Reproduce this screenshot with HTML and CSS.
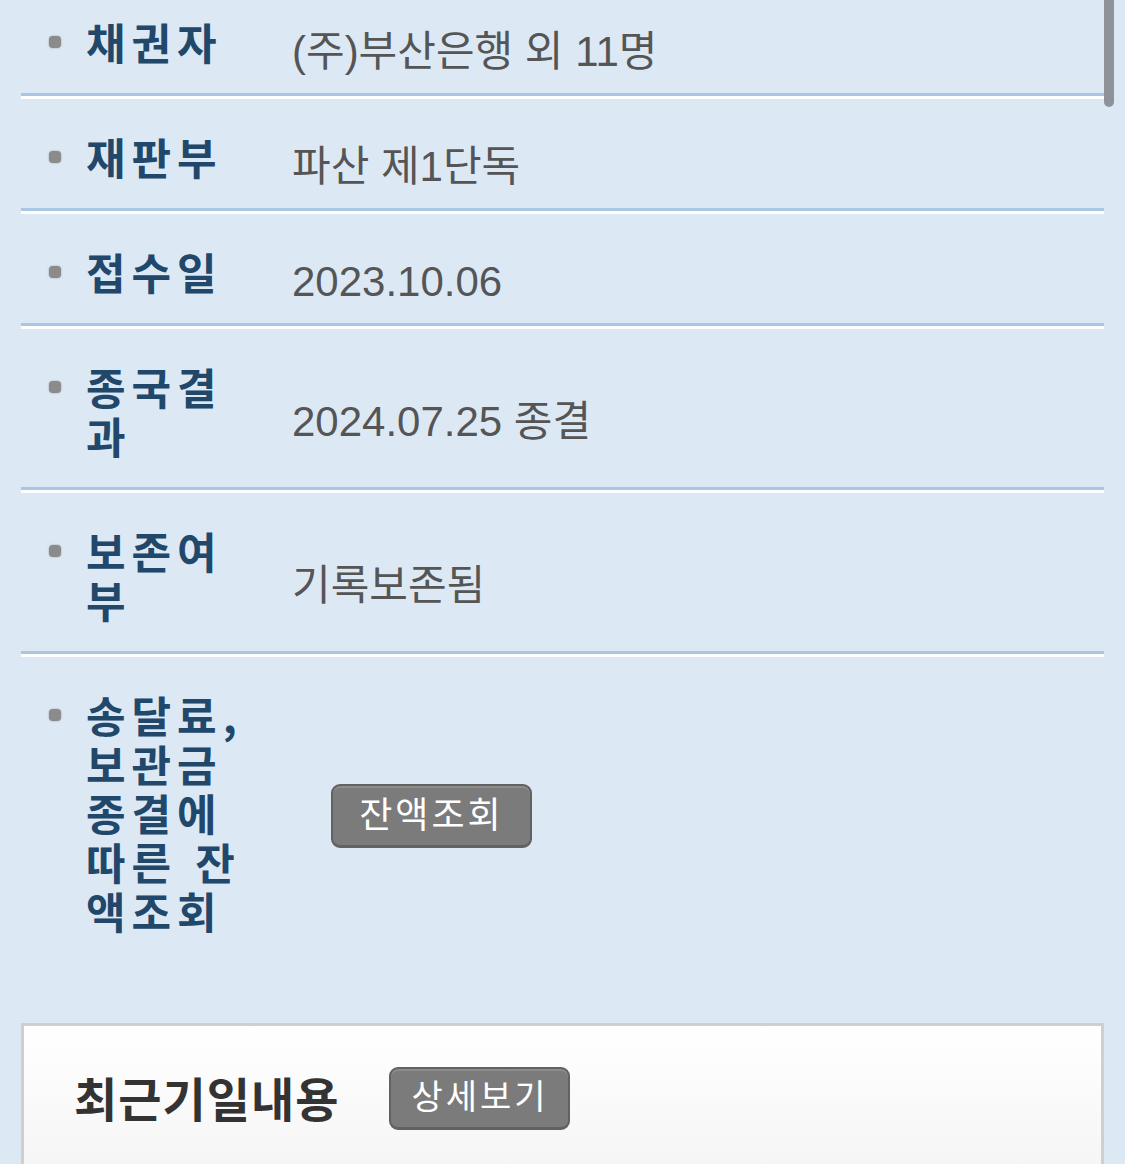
FILE: index.html
```html
<!DOCTYPE html>
<html lang="ko">
<head>
    <meta charset="UTF-8">
    <meta name="viewport" content="width=device-width, initial-scale=1.0">
    <title>사건일반내용</title>
    <link rel="stylesheet" href="styles.css">
</head>
<body>
    <div class="info">
        <div class="row">
            <div class="label"><span class="dot"></span><span class="label-text">채권자</span></div>
            <div class="value">(주)부산은행 외 11명</div>
        </div>
        <div class="row">
            <div class="label"><span class="dot"></span><span class="label-text">재판부</span></div>
            <div class="value">파산 제1단독</div>
        </div>
        <div class="row">
            <div class="label"><span class="dot"></span><span class="label-text">접수일</span></div>
            <div class="value">2023.10.06</div>
        </div>
        <div class="row">
            <div class="label"><span class="dot"></span><span class="label-text">종국결과</span></div>
            <div class="value">2024.07.25 종결</div>
        </div>
        <div class="row">
            <div class="label"><span class="dot"></span><span class="label-text">보존여부</span></div>
            <div class="value">기록보존됨</div>
        </div>
        <div class="row last">
            <div class="label"><span class="dot"></span><span class="label-text">송달료, 보관금 종결에 따른 잔액조회</span></div>
            <div class="value"><button class="btn btn-balance">잔액조회</button></div>
        </div>
    </div>

    <div class="box">
        <h3 class="box-title">최근기일내용</h3>
        <button class="btn btn-detail">상세보기</button>
    </div>

    <div class="scrollbar"></div>
</body>
</html>
```

FILE: styles.css
```css
*{
    margin: 0;
    padding: 0;
    box-sizing: border-box;
}

body{
    background-color: #dce9f5;
    font-family: "Liberation Sans", "Noto Sans CJK KR", sans-serif;
    padding: 0 21px;
    overflow: hidden;
}

.info{
    margin-top: -16px;
}
.row{
    display: flex;
    align-items: center;
    padding: 33px 0 27px;
    border-bottom: 3px solid #a9c7e3;
    box-shadow: 0 3px 0 #fff;
    margin-bottom: 3px;
}
.row.last{
    border-bottom: 0;
    box-shadow: none;
    margin-bottom: 0;
}

.label{
    display: flex;
    align-items: flex-start;
    width: 271px;
    flex-shrink: 0;
    padding-left: 28px;
}
.dot{
    width: 12px;
    height: 12px;
    margin-top: 19px;
    margin-right: 25px;
    border-radius: 4px;
    background: #8b8b8b;
    box-shadow: 0 0 2px #999;
    flex-shrink: 0;
}
.label-text{
    width: 166px;
    font-family: "Noto Sans CJK KR", sans-serif;
    font-weight: 700;
    font-size: 43px;
    line-height: 49px;
    letter-spacing: 6px;
    color: #21486b;
}

/* value text sits a little lower than the label */
.value{
    font-size: 42px;
    line-height: 49px;
    color: #555;
    padding-top: 10px;
    margin-bottom: -10px;
}
.row.last .value{
    padding-top: 0;
    margin-bottom: 0;
}

.btn{
    display: inline-flex;
    align-items: center;
    justify-content: center;
    height: 64px;
    padding-bottom: 8px;
    background: #7b7b7b;
    color: #fff;
    border: 2px solid #626262;
    border-bottom-width: 3px;
    border-radius: 9px;
    box-shadow: inset 0 2px 0 #8c8c8c;
    font-family: "Noto Sans CJK KR", sans-serif;
    font-weight: 400;
}
.btn-balance{
    margin-left: 39px;
    margin-top: 7px;
    width: 201px;
    font-size: 36px;
    letter-spacing: 3px;
}
.btn-detail{
    width: 181px;
    height: 63px;
    font-size: 34px;
    letter-spacing: 3px;
    margin-left: 50px;
}

.box{
    display: flex;
    align-items: flex-start;
    margin-top: 61px;
    height: 200px;
    padding: 41px 0 0 50px;
    border: 3px solid #cfcfcf;
    background: linear-gradient(#ffffff, #f2f2f2);
}
.box-title{
    font-family: "Noto Sans CJK KR", sans-serif;
    font-weight: 700;
    font-size: 47px;
    line-height: 60px;
    letter-spacing: 1px;
    color: #333;
}

.scrollbar{
    position: fixed;
    top: 0;
    right: 11px;
    width: 10px;
    height: 107px;
    background: #8e9399;
    border-radius: 0 0 5px 5px;
}
```
